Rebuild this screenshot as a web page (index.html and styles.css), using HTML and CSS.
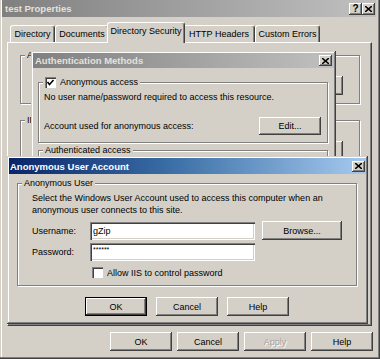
FILE: index.html
```html
<!DOCTYPE html>
<html lang="en">

<head>
    <meta charset="UTF-8">
    <meta name="viewport" content="width=device-width, initial-scale=1.0">
    <title>test Properties</title>
    <link rel="stylesheet" href="styles.css">
</head>

<body>
    <div class="window">
        <!-- Title bar -->
        <div class="titlebar inactive">
            <span class="title">test Properties</span>
            <div class="title-buttons">
                <span class="tbtn">?</span>
                <span class="tbtn"><svg width="7" height="6" viewBox="0 0 7 6"><path d="M0 0 L7 6 M7 0 L0 6" stroke="#000" stroke-width="1.5"/></svg></span>
            </div>
        </div>

        <!-- Tabs -->
        <div class="tabs">
            <div class="tab tab-dir">Directory</div>
            <div class="tab tab-docs">Documents</div>
            <div class="tab tab-sec active">Directory Security</div>
            <div class="tab tab-http">HTTP Headers</div>
            <div class="tab tab-err">Custom Errors</div>
        </div>

        <div class="panel">
            <fieldset class="group page-group">
                <legend>Anonymous access and authentication control</legend>
                <div class="page-body">
                    <button class="btn"></button>
                </div>
            </fieldset>
            <fieldset class="group page-group">
                <legend>IP address and domain name restrictions</legend>
                <div class="page-body">
                    <button class="btn"></button>
                </div>
            </fieldset>
        </div>

        <div class="actions">
            <button class="btn">OK</button>
            <button class="btn">Cancel</button>
            <button class="btn" disabled>Apply</button>
            <button class="btn">Help</button>
        </div>

        <!-- Authentication Methods dialog -->
        <div class="dialog auth-dialog">
            <div class="titlebar inactive small">
                <span class="title">Authentication Methods</span>
                <span class="tbtn close"><svg width="7" height="6" viewBox="0 0 7 6"><path d="M0 0 L7 6 M7 0 L0 6" stroke="#000" stroke-width="1.5"/></svg></span>
            </div>
            <div class="auth-body">
                <fieldset class="group first">
                    <legend><span class="check checked"><svg width="9" height="9" viewBox="0 0 9 9"><path d="M1.5 4 L3.5 6.5 L7.5 2" fill="none" stroke="#000" stroke-width="1.6"/></svg></span>Anonymous access</legend>
                    <div class="auth-group-body">
                        <div class="line">No user name/password required to access this resource.</div>
                        <div class="account-row">
                            <span>Account used for anonymous access:</span>
                            <button class="btn">Edit...</button>
                        </div>
                    </div>
                </fieldset>
                <fieldset class="group second">
                    <legend>Authenticated access</legend>
                    <div class="auth-group-body tall"></div>
                </fieldset>
            </div>
        </div>

        <!-- Anonymous User Account dialog -->
        <div class="dialog anon-dialog">
            <div class="titlebar active">
                <span class="title">Anonymous User Account</span>
                <span class="tbtn close"><svg width="7" height="6" viewBox="0 0 7 6"><path d="M0 0 L7 6 M7 0 L0 6" stroke="#000" stroke-width="1.5"/></svg></span>
            </div>
            <div class="anon-body">
                <fieldset class="group">
                    <legend>Anonymous User</legend>
                    <div class="anon-group-body">
                        <p class="desc">Select the Windows User Account used to access this computer when an<br>anonymous user connects to this site.</p>
                        <div class="form-row">
                            <label>Username:</label>
                            <input type="text" class="field" value="gZip">
                            <button class="btn browse">Browse...</button>
                        </div>
                        <div class="form-row second-row">
                            <label>Password:</label>
                            <input type="text" class="field pw" value="******">
                        </div>
                        <div class="check-row">
                            <span class="check"></span>
                            <span>Allow IIS to control password</span>
                        </div>
                    </div>
                </fieldset>
                <div class="dialog-actions">
                    <button class="btn default">OK</button>
                    <button class="btn">Cancel</button>
                    <button class="btn">Help</button>
                </div>
            </div>
        </div>
    </div>
</body>

</html>
```

FILE: styles.css
```css
* {
    box-sizing: border-box;
}

body {
    margin: 0;
    background-color: #d4d0c8;
    font-family: "Liberation Sans", Arial, sans-serif;
    font-size: 9px;
    color: #000;
}

.window {
    position: relative;
    width: 380px;
    height: 359px;
    overflow: hidden;
    padding: 0 4px 0 2px;
    background-color: #d4d0c8;
    box-shadow: inset -1px -1px #404040, inset -2px -2px #808080, inset 1px 0 #d4d0c8, inset 2px 0 #fff;
}

/* Title bars */
.titlebar {
    display: flex;
    align-items: center;
    justify-content: space-between;
    height: 17px;
    padding: 0 1px 0 3px;
}

.titlebar.small {
    height: 15px;
    padding: 0 2px 0 2px;
}

.titlebar.active {
    height: 16px;
    padding: 0 1px 0 1px;
    background: linear-gradient(90deg, #0a246a, #3a6ea5 45%, #a6caf0);
}

.titlebar.inactive {
    background: linear-gradient(90deg, #808080, #c0c0c0);
}

.title {
    font-weight: bold;
    font-size: 9.5px;
    color: #fff;
}

.inactive .title {
    color: #e4e2dc;
}

.title-buttons {
    display: flex;
}

.tbtn {
    display: flex;
    align-items: center;
    justify-content: center;
    width: 13px;
    height: 12px;
    font-weight: bold;
    font-size: 10px;
    background-color: #d4d0c8;
    box-shadow: inset -1px -1px #404040, inset 1px 1px #fff, inset -2px -2px #808080;
}

.tbtn.close {
    height: 11px;
}

/* Tabs */
.tabs {
    position: relative;
    z-index: 1;
    display: flex;
    align-items: flex-end;
    height: 20px;
    margin-top: 5px;
    padding-left: 8px;
}

.tab {
    height: 17px;
    line-height: 16px;
    text-align: center;
    white-space: nowrap;
    background-color: #d4d0c8;
    border: 1px solid;
    border-color: #fff #404040 transparent #fff;
    border-bottom: none;
    border-radius: 3px 3px 0 0;
    box-shadow: inset -1px 0 #808080;
}

.tab-dir { width: 45px; }
.tab-docs { width: 54px; }
.tab-http { width: 72px; }
.tab-err { width: 65px; }

.tab.active {
    width: 78px;
    height: 21px;
    line-height: 17px;
    margin: 0 -2px -1px -2px;
    position: relative;
}

.panel {
    height: 284px;
    margin: 0 4px 0 5px;
    padding: 6px 11px 0 12px;
    border: 1px solid;
    border-color: #fff #404040 #404040 #fff;
    box-shadow: inset -1px -1px #808080;
}

/* Group boxes */
.group {
    margin: 0;
    padding: 0;
    min-inline-size: 0;
    border: 1px solid #808080;
    box-shadow: inset 1px 1px #fff, 1px 1px #fff;
}

.group legend {
    display: flex;
    align-items: center;
    margin-left: 4px;
    padding: 0 2px;
    line-height: 12px;
    background-color: #d4d0c8;
}

.page-group + .page-group {
    margin-top: 10px;
    height: 120px;
}

.page-body {
    display: flex;
    align-items: center;
    justify-content: flex-end;
    padding: 15px 16px 8px 12px;
}

/* Buttons */
.btn {
    width: 62px;
    height: 19px;
    padding: 0;
    border: none;
    font-family: inherit;
    font-size: 9px;
    color: #000;
    background-color: #d4d0c8;
    box-shadow: inset -1px -1px #404040, inset 1px 1px #fff, inset -2px -2px #808080;
    flex-shrink: 0;
}

.btn:disabled {
    color: #a0a0a0;
    text-shadow: 1px 1px #fff;
}

.btn.default {
    box-shadow: inset 0 0 0 1px #000, inset -2px -2px #404040, inset 2px 2px #fff, inset -3px -3px #808080;
}

.actions {
    display: flex;
    justify-content: flex-end;
    gap: 5px;
    margin-top: 6px;
    padding-right: 3px;
}

/* Dialogs */
.dialog {
    position: absolute;
    overflow: hidden;
    padding: 2px;
    background-color: #d4d0c8;
    box-shadow: inset -1px -1px #404040, inset 1px 1px #d4d0c8, inset -2px -2px #808080, inset 2px 2px #fff;
}

.auth-dialog {
    left: 31px;
    top: 51px;
    width: 305px;
    height: 150px;
}

.auth-body {
    padding: 0 6px 0 5px;
}

.auth-body .first {
    margin-top: 8px;
}

.auth-body .second {
    margin-top: 1px;
}

.auth-group-body {
    padding: 3px 6px 7px 5px;
}

.auth-group-body.tall {
    height: 40px;
}

.line {
    line-height: 13px;
    white-space: nowrap;
}

.account-row {
    display: flex;
    align-items: center;
    justify-content: space-between;
    margin-top: 13px;
}

.account-row .btn {
    height: 18px;
}

.check {
    display: inline-flex;
    align-items: center;
    justify-content: center;
    width: 11px;
    height: 11px;
    margin-right: 4px;
    background-color: #fff;
    box-shadow: inset 1px 1px #808080, inset 2px 2px #404040, inset -1px -1px #fff;
}

.anon-dialog {
    left: 7px;
    top: 156px;
    width: 361px;
    height: 168px;
}

.anon-body {
    padding: 0 9px 0 8px;
}

.anon-body .group {
    margin-top: 3px;
}

.anon-group-body {
    padding: 3px 14px 7px 14px;
}

.desc {
    margin: 0;
    line-height: 12px;
}

.form-row {
    display: flex;
    align-items: center;
    margin-top: 5px;
}

.form-row.second-row {
    margin-top: 3px;
}

.form-row label {
    width: 58px;
}

.field {
    width: 165px;
    height: 18px;
    padding: 0 3px;
    border: none;
    font-family: inherit;
    font-size: 9px;
    background-color: #fff;
    box-shadow: inset 1px 1px #808080, inset 2px 2px #404040, inset -1px -1px #fff, inset -2px -2px #d4d0c8;
}

.field.pw {
    font-size: 7px;
    padding-bottom: 5px;
}

.browse {
    width: 80px;
    margin-left: 7px;
}

.check-row {
    display: flex;
    align-items: center;
    margin-top: 6px;
    padding-left: 60px;
}

.dialog-actions {
    display: flex;
    justify-content: center;
    gap: 9px;
    margin-top: 11px;
}
```
